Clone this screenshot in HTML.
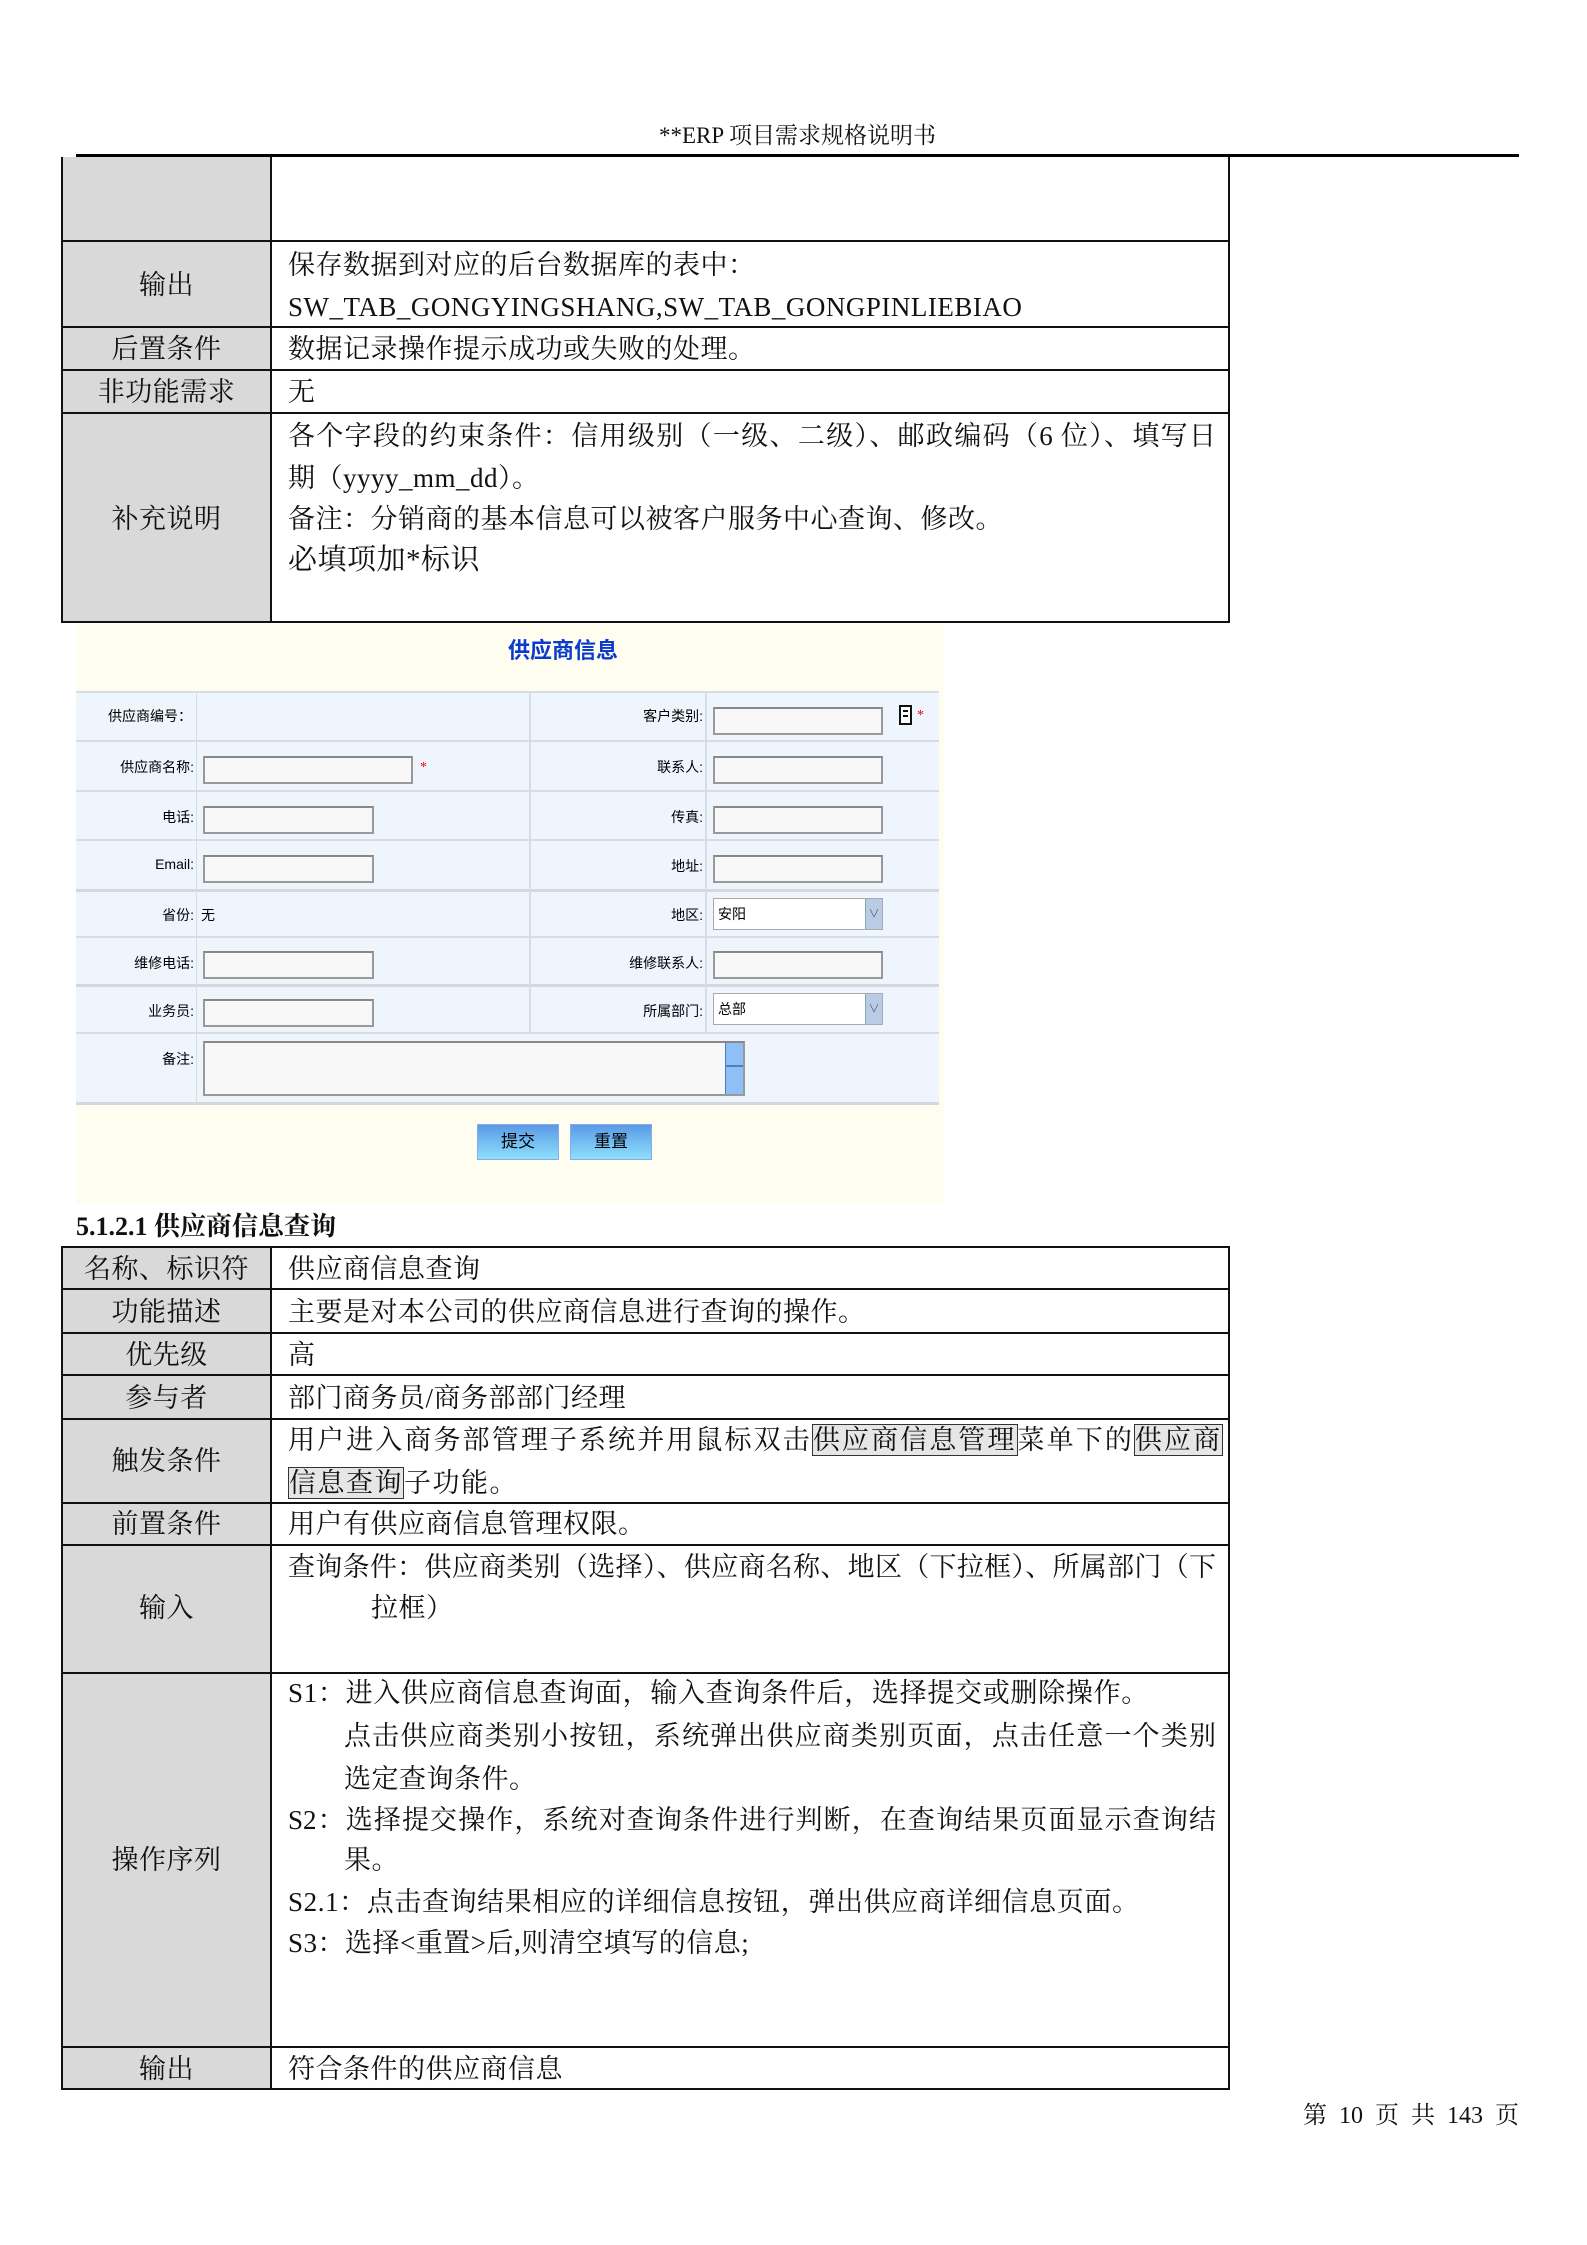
<!DOCTYPE html>
<html><head><meta charset="utf-8"><style>
*{margin:0;padding:0;box-sizing:border-box}
body{width:1587px;height:2245px;background:#fff;position:relative;overflow:hidden;font-family:"Liberation Serif","Noto Serif CJK SC","Noto Sans CJK SC",serif;color:#111}
.a{position:absolute}
.t{font-size:27px;line-height:42px;white-space:nowrap;letter-spacing:0.5px}
.j{white-space:normal;text-align:justify;text-align-last:justify;text-justify:inter-character;letter-spacing:0}
.lab{background:#d9d9d9}
.hl{position:absolute;height:2px;background:#111}
.vl{position:absolute;width:2px;background:#111}
.f{font-family:"Liberation Sans","Noto Sans CJK SC",sans-serif;font-size:14px;color:#000;white-space:nowrap}
.inp{position:absolute;height:28px;background:#f8f8f8;border:2px solid #999;border-top-color:#888}
.bx{border:1.5px solid #333;background:#e6e6e6}
</style></head><body>

<div class="a" style="left:0;width:1595px;top:121px;text-align:center;font-size:23px;line-height:30px">**ERP 项目需求规格说明书</div>
<div class="a" style="left:76px;width:1443px;top:154px;height:3px;background:#000"></div>

<div class="a lab" style="left:62px;top:157px;width:209px;height:465px"></div>
<div class="vl" style="left:61px;top:157px;height:466px"></div>
<div class="vl" style="left:270px;top:157px;height:466px"></div>
<div class="vl" style="left:1228px;top:157px;height:466px"></div>
<div class="hl" style="left:61px;width:1169px;top:240px"></div>
<div class="hl" style="left:61px;width:1169px;top:326px"></div>
<div class="hl" style="left:61px;width:1169px;top:369px"></div>
<div class="hl" style="left:61px;width:1169px;top:412px"></div>
<div class="hl" style="left:61px;width:1169px;top:621px"></div>

<div class="a t" style="left:62px;width:209px;text-align:center;top:264px">输出</div>
<div class="a t" style="left:288px;top:244px">保存数据到对应的后台数据库的表中：</div>
<div class="a t" style="left:288px;top:286px">SW_TAB_GONGYINGSHANG,SW_TAB_GONGPINLIEBIAO</div>
<div class="a t" style="left:62px;width:209px;text-align:center;top:328px">后置条件</div>
<div class="a t" style="left:288px;top:328px">数据记录操作提示成功或失败的处理。</div>
<div class="a t" style="left:62px;width:209px;text-align:center;top:371px">非功能需求</div>
<div class="a t" style="left:288px;top:371px">无</div>
<div class="a t" style="left:62px;width:209px;text-align:center;top:498px">补充说明</div>
<div class="a t j" style="left:288px;width:928px;top:415px">各个字段的约束条件：信用级别（一级、二级）、邮政编码（6 位）、填写日</div>
<div class="a t" style="left:288px;top:457px">期（yyyy_mm_dd）。</div>
<div class="a t" style="left:288px;top:498px">备注：分销商的基本信息可以被客户服务中心查询、修改。</div>
<div class="a t" style="left:288px;top:539px;font-size:29px">必填项加*标识</div>

<div class="a" style="left:76px;top:624px;width:868px;height:580px;background:#fffdef"></div>
<div class="a" style="left:463px;top:623px;width:200px;height:56px;text-align:center;line-height:56px;font-family:'Liberation Sans','Noto Sans CJK SC',sans-serif;font-size:22px;color:#0a3bcc;font-weight:bold">供应商信息</div>
<div class="a" style="left:76px;top:692px;width:863px;height:411px;background:#eef5fd"></div>
<div class="a" style="left:76px;width:863px;top:691px;height:2px;background:#d8dde4"></div>
<div class="a" style="left:76px;width:863px;top:740px;height:2px;background:#d8dde4"></div>
<div class="a" style="left:76px;width:863px;top:790px;height:2px;background:#d8dde4"></div>
<div class="a" style="left:76px;width:863px;top:839px;height:2px;background:#d8dde4"></div>
<div class="a" style="left:76px;width:863px;top:889px;height:3px;background:#d4d8de"></div>
<div class="a" style="left:76px;width:863px;top:936px;height:2px;background:#d8dde4"></div>
<div class="a" style="left:76px;width:863px;top:984px;height:3px;background:#d4d8de"></div>
<div class="a" style="left:76px;width:863px;top:1032px;height:2px;background:#d8dde4"></div>
<div class="a" style="left:76px;width:863px;top:1102px;height:3px;background:#d4d8de"></div>
<div class="a" style="left:196px;width:1px;top:692px;height:411px;background:#d8dde4"></div>
<div class="a" style="left:529px;width:2px;top:692px;height:341px;background:#d8dde4"></div>
<div class="a" style="left:705px;width:2px;top:692px;height:341px;background:#d8dde4"></div>

<div class="a f" style="left:76px;width:116px;text-align:right;top:706px">供应商编号：</div>
<div class="a f" style="left:76px;width:118px;text-align:right;top:757px">供应商名称:</div>
<div class="a f" style="left:76px;width:118px;text-align:right;top:807px">电话:</div>
<div class="a f" style="left:76px;width:118px;text-align:right;top:856px">Email:</div>
<div class="a f" style="left:76px;width:118px;text-align:right;top:905px">省份:</div>
<div class="a f" style="left:201px;top:905px">无</div>
<div class="a f" style="left:76px;width:118px;text-align:right;top:953px">维修电话:</div>
<div class="a f" style="left:76px;width:118px;text-align:right;top:1001px">业务员:</div>
<div class="a f" style="left:76px;width:118px;text-align:right;top:1049px">备注:</div>
<div class="a f" style="left:530px;width:173px;text-align:right;top:706px">客户类别:</div>
<div class="a f" style="left:530px;width:173px;text-align:right;top:757px">联系人:</div>
<div class="a f" style="left:530px;width:173px;text-align:right;top:807px">传真:</div>
<div class="a f" style="left:530px;width:173px;text-align:right;top:856px">地址:</div>
<div class="a f" style="left:530px;width:173px;text-align:right;top:905px">地区:</div>
<div class="a f" style="left:530px;width:173px;text-align:right;top:953px">维修联系人:</div>
<div class="a f" style="left:530px;width:173px;text-align:right;top:1001px">所属部门:</div>

<div class="inp" style="left:203px;top:756px;width:210px"></div>
<div class="a" style="left:420px;top:760px;color:#e00;font-size:14px">*</div>
<div class="inp" style="left:203px;top:806px;width:171px"></div>
<div class="inp" style="left:203px;top:855px;width:171px"></div>
<div class="inp" style="left:203px;top:951px;width:171px"></div>
<div class="inp" style="left:203px;top:999px;width:171px"></div>
<div class="inp" style="left:713px;top:707px;width:170px"></div>
<div class="a" style="left:899px;top:705px;width:13px;height:20px;background:#fff;border:2px solid #111"><div style="margin:3px 2px;height:2px;background:#111"></div><div style="margin:0 2px;height:2px;background:#111"></div></div>
<div class="a" style="left:917px;top:708px;color:#e00;font-size:14px">*</div>
<div class="inp" style="left:713px;top:756px;width:170px"></div>
<div class="inp" style="left:713px;top:806px;width:170px"></div>
<div class="inp" style="left:713px;top:855px;width:170px"></div>
<div class="inp" style="left:713px;top:898px;width:170px;height:32px;border-width:1px;border-color:#aaa;background:#fff"><span class="f" style="position:absolute;left:4px;top:5px">安阳</span><div style="position:absolute;right:0;top:0;width:17px;height:30px;background:#b8cce6;border-left:1px solid #8aa;color:#333;font-size:11px;text-align:center;line-height:30px">∨</div></div>
<div class="inp" style="left:713px;top:951px;width:170px"></div>
<div class="inp" style="left:713px;top:993px;width:170px;height:32px;border-width:1px;border-color:#aaa;background:#fff"><span class="f" style="position:absolute;left:4px;top:5px">总部</span><div style="position:absolute;right:0;top:0;width:17px;height:30px;background:#b8cce6;border-left:1px solid #8aa;color:#333;font-size:11px;text-align:center;line-height:30px">∨</div></div>
<div class="inp" style="left:203px;top:1041px;width:542px;height:55px"><div style="position:absolute;right:0;top:0;width:18px;height:51px;background:#8fc0f5;border-left:1px solid #4a7fc8"><div style="height:24px;border-bottom:2px solid #4a7fc8"></div></div></div>
<div class="a f" style="left:477px;top:1124px;width:82px;height:36px;background:linear-gradient(#5a9ae6,#8de0fb);border:1px solid #8aa8ee;text-align:center;line-height:34px;font-size:17px">提交</div>
<div class="a f" style="left:570px;top:1124px;width:82px;height:36px;background:linear-gradient(#5a9ae6,#8de0fb);border:1px solid #8aa8ee;text-align:center;line-height:34px;font-size:17px">重置</div>

<div class="a" style="left:76px;top:1211px;font-size:26px;line-height:32px;font-weight:bold;white-space:nowrap">5.1.2.1 供应商信息查询</div>

<div class="a lab" style="left:62px;top:1247px;width:209px;height:842px"></div>
<div class="vl" style="left:61px;top:1246px;height:844px"></div>
<div class="vl" style="left:270px;top:1246px;height:844px"></div>
<div class="vl" style="left:1228px;top:1246px;height:844px"></div>
<div class="hl" style="left:61px;width:1169px;top:1246px"></div>
<div class="hl" style="left:61px;width:1169px;top:1288px"></div>
<div class="hl" style="left:61px;width:1169px;top:1332px"></div>
<div class="hl" style="left:61px;width:1169px;top:1374px"></div>
<div class="hl" style="left:61px;width:1169px;top:1418px"></div>
<div class="hl" style="left:61px;width:1169px;top:1502px"></div>
<div class="hl" style="left:61px;width:1169px;top:1544px"></div>
<div class="hl" style="left:61px;width:1169px;top:1672px"></div>
<div class="hl" style="left:61px;width:1169px;top:2046px"></div>
<div class="hl" style="left:61px;width:1169px;top:2088px"></div>

<div class="a t" style="left:62px;width:209px;text-align:center;top:1248px">名称、标识符</div>
<div class="a t" style="left:288px;top:1248px">供应商信息查询</div>
<div class="a t" style="left:62px;width:209px;text-align:center;top:1291px">功能描述</div>
<div class="a t" style="left:288px;top:1291px">主要是对本公司的供应商信息进行查询的操作。</div>
<div class="a t" style="left:62px;width:209px;text-align:center;top:1334px">优先级</div>
<div class="a t" style="left:288px;top:1334px">高</div>
<div class="a t" style="left:62px;width:209px;text-align:center;top:1377px">参与者</div>
<div class="a t" style="left:288px;top:1377px">部门商务员/商务部部门经理</div>
<div class="a t" style="left:62px;width:209px;text-align:center;top:1440px">触发条件</div>
<div class="a t" style="left:288px;top:1419px;letter-spacing:2.1px">用户进入商务部管理子系统并用鼠标双击<span class="bx">供应商信息管理</span>菜单下的<span class="bx">供应商</span></div>
<div class="a t" style="left:288px;top:1462px;letter-spacing:1.5px"><span class="bx">信息查询</span>子功能。</div>
<div class="a t" style="left:62px;width:209px;text-align:center;top:1503px">前置条件</div>
<div class="a t" style="left:288px;top:1503px">用户有供应商信息管理权限。</div>
<div class="a t" style="left:62px;width:209px;text-align:center;top:1587px">输入</div>
<div class="a t j" style="left:288px;width:928px;top:1546px">查询条件：供应商类别（选择）、供应商名称、地区（下拉框）、所属部门（下</div>
<div class="a t" style="left:371px;top:1587px">拉框）</div>
<div class="a t" style="left:62px;width:209px;text-align:center;top:1839px">操作序列</div>
<div class="a t" style="left:288px;top:1672px;letter-spacing:0.7px">S1：进入供应商信息查询面，输入查询条件后，选择提交或删除操作。</div>
<div class="a t j" style="left:344px;width:872px;top:1715px">点击供应商类别小按钮，系统弹出供应商类别页面，点击任意一个类别</div>
<div class="a t" style="left:344px;top:1758px">选定查询条件。</div>
<div class="a t j" style="left:288px;width:928px;top:1799px">S2：选择提交操作，系统对查询条件进行判断，在查询结果页面显示查询结</div>
<div class="a t" style="left:344px;top:1839px">果。</div>
<div class="a t" style="left:288px;top:1881px;letter-spacing:0.6px">S2.1：点击查询结果相应的详细信息按钮，弹出供应商详细信息页面。</div>
<div class="a t" style="left:288px;top:1922px">S3：选择&lt;重置&gt;后,则清空填写的信息;</div>
<div class="a t" style="left:62px;width:209px;text-align:center;top:2048px">输出</div>
<div class="a t" style="left:288px;top:2048px">符合条件的供应商信息</div>

<div class="a" style="right:68px;top:2101px;font-size:24px;line-height:30px;white-space:nowrap;word-spacing:6px">第 10 页 共 143 页</div>
</body></html>
